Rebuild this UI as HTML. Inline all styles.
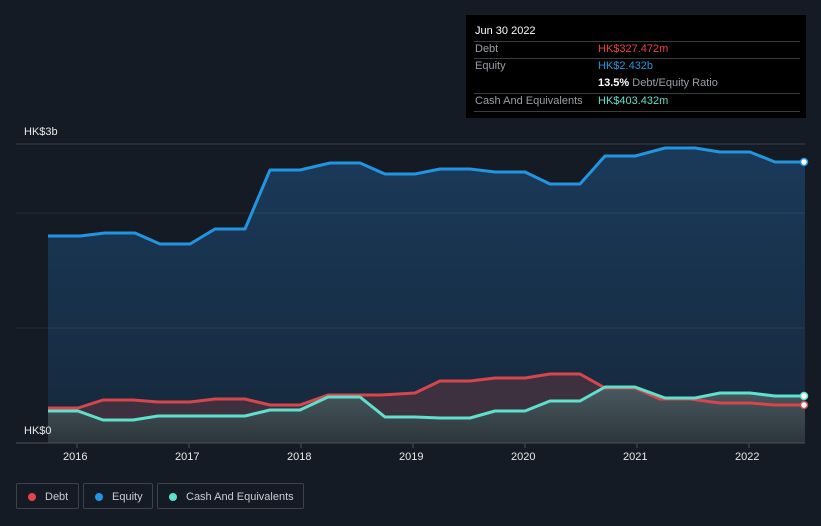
<!DOCTYPE html>
<html><head><style>
body{margin:0;background:#151b24;width:821px;height:526px;overflow:hidden;font-family:"Liberation Sans",sans-serif;position:relative}
.tt{position:absolute;left:466px;top:15px;width:340px;height:103px;background:#000;color:#fff;font-size:11px}
.r{position:absolute;left:8px;width:326px;border-top:1px solid #3a3d42}
.l{position:absolute;color:#9a9ea5}
.ax{position:absolute;color:#e6e8ea;font-size:11px}
.lg{position:absolute;top:483px;height:26px;border:1px solid #3d424a;border-radius:2px;color:#c8ccd2;font-size:11px;line-height:26px;box-sizing:border-box}
.lg i{position:absolute;left:11px;top:9px;width:8px;height:8px;border-radius:50%}
</style></head><body>
<svg width="821" height="526" style="position:absolute;left:0;top:0">
<defs>
<linearGradient id="ge" x1="0" y1="0" x2="0" y2="1"><stop offset="0" stop-color="#1a3a5a"/><stop offset="1" stop-color="#16283b"/></linearGradient>
<linearGradient id="gc" x1="0" y1="0" x2="0" y2="1"><stop offset="0" stop-color="#4a5a60"/><stop offset="1" stop-color="#2c353c"/></linearGradient>
</defs>
<path fill="url(#ge)" d="M48,236 L80,236 105,233 135,233 160,244 190,244 215,229 245,229 270,170 300,170 330,163 360,163 385,174 415,174 440,169 470,169 495,172 525,172 550,184 580,184 605,156 635,156 665,148 695,148 720,152 750,152 775,162 805,162 805,443 48,443Z"/>
<path fill="#3d3140" d="M48,408 L78,408 103,400 133,400 158,402 190,402 215,399 245,399 270,405 300,405 328,395 380,395 415,393 440,381 470,381 495,378 525,378 550,374 580,374 605,388 635,388 660,399 690,399 720,403 750,403 775,405 805,405 805,443 48,443Z"/>
<path fill="url(#gc)" d="M48,411 L78,411 103,420 133,420 158,416 245,416 270,410 300,410 328,397 360,397 385,417 415,417 440,418 470,418 495,411 525,411 550,401 580,401 605,387 635,387 665,398 695,398 720,393 750,393 775,396 805,396 805,443 48,443Z"/>
<line x1="16" y1="144" x2="805" y2="144" stroke="#3a414c"/>
<line x1="16" y1="213" x2="805" y2="213" stroke="#ffffff" stroke-opacity="0.07"/>
<line x1="16" y1="328" x2="805" y2="328" stroke="#ffffff" stroke-opacity="0.07"/>
<g fill="none" stroke-width="3" stroke-linejoin="round">
<polyline stroke="#2394e0" points="48,236 80,236 105,233 135,233 160,244 190,244 215,229 245,229 270,170 300,170 330,163 360,163 385,174 415,174 440,169 470,169 495,172 525,172 550,184 580,184 605,156 635,156 665,148 695,148 720,152 750,152 775,162 805,162"/>
<polyline stroke="#d9454c" points="48,408 78,408 103,400 133,400 158,402 190,402 215,399 245,399 270,405 300,405 328,395 380,395 415,393 440,381 470,381 495,378 525,378 550,374 580,374 605,388 635,388 660,399 690,399 720,403 750,403 775,405 805,405"/>
<polyline stroke="#5ee0cc" points="48,411 78,411 103,420 133,420 158,416 245,416 270,410 300,410 328,397 360,397 385,417 415,417 440,418 470,418 495,411 525,411 550,401 580,401 605,387 635,387 665,398 695,398 720,393 750,393 775,396 805,396"/>
</g>
<line x1="16" y1="443" x2="805" y2="443" stroke="#4a5058"/>
<g stroke="#4a5058"><line x1="77" y1="443" x2="77" y2="448"/><line x1="189" y1="443" x2="189" y2="448"/><line x1="301" y1="443" x2="301" y2="448"/><line x1="413" y1="443" x2="413" y2="448"/><line x1="525" y1="443" x2="525" y2="448"/><line x1="637" y1="443" x2="637" y2="448"/><line x1="749" y1="443" x2="749" y2="448"/></g>
<circle cx="804" cy="162" r="3.5" fill="#fff" stroke="#2394e0" stroke-width="1.5"/>
<circle cx="804" cy="396" r="3.5" fill="#fff" stroke="#5ee0cc" stroke-width="1.5"/>
<circle cx="804" cy="405" r="3.5" fill="#fff" stroke="#d9454c" stroke-width="1.5"/>
</svg>
<div class="ax" style="left:24px;top:126px">HK$3b</div>
<div class="ax" style="left:24px;top:425px">HK$0</div>
<div class="ax" style="left:63px;top:451px">2016</div>
<div class="ax" style="left:175px;top:451px">2017</div>
<div class="ax" style="left:287px;top:451px">2018</div>
<div class="ax" style="left:399px;top:451px">2019</div>
<div class="ax" style="left:511px;top:451px">2020</div>
<div class="ax" style="left:623px;top:451px">2021</div>
<div class="ax" style="left:735px;top:451px">2022</div>
<div class="tt">
<div style="position:absolute;left:9px;top:10px">Jun 30 2022</div>
<div class="r" style="top:26px"></div>
<div class="l" style="left:9px;top:28px">Debt</div><div style="position:absolute;left:132px;top:28px;color:#e8414a">HK$327.472m</div>
<div class="r" style="top:43px"></div>
<div class="l" style="left:9px;top:45px">Equity</div><div style="position:absolute;left:132px;top:45px;color:#2394e0">HK$2.432b</div>
<div style="position:absolute;left:132px;top:62px"><b>13.5%</b> <span style="color:#9a9ea5">Debt/Equity Ratio</span></div>
<div class="r" style="top:78px"></div>
<div class="l" style="left:9px;top:80px">Cash And Equivalents</div><div style="position:absolute;left:132px;top:80px;color:#5ee0cc">HK$403.432m</div>
<div class="r" style="top:96px"></div>
</div>
<div class="lg" style="left:16px;width:63px"><i style="background:#e8414a"></i><span style="position:absolute;left:28px">Debt</span></div>
<div class="lg" style="left:83px;width:70px"><i style="background:#2394e0"></i><span style="position:absolute;left:28px">Equity</span></div>
<div class="lg" style="left:157px;width:147px"><i style="background:#5ee0cc"></i><span style="position:absolute;left:28px">Cash And Equivalents</span></div>
</body></html>
